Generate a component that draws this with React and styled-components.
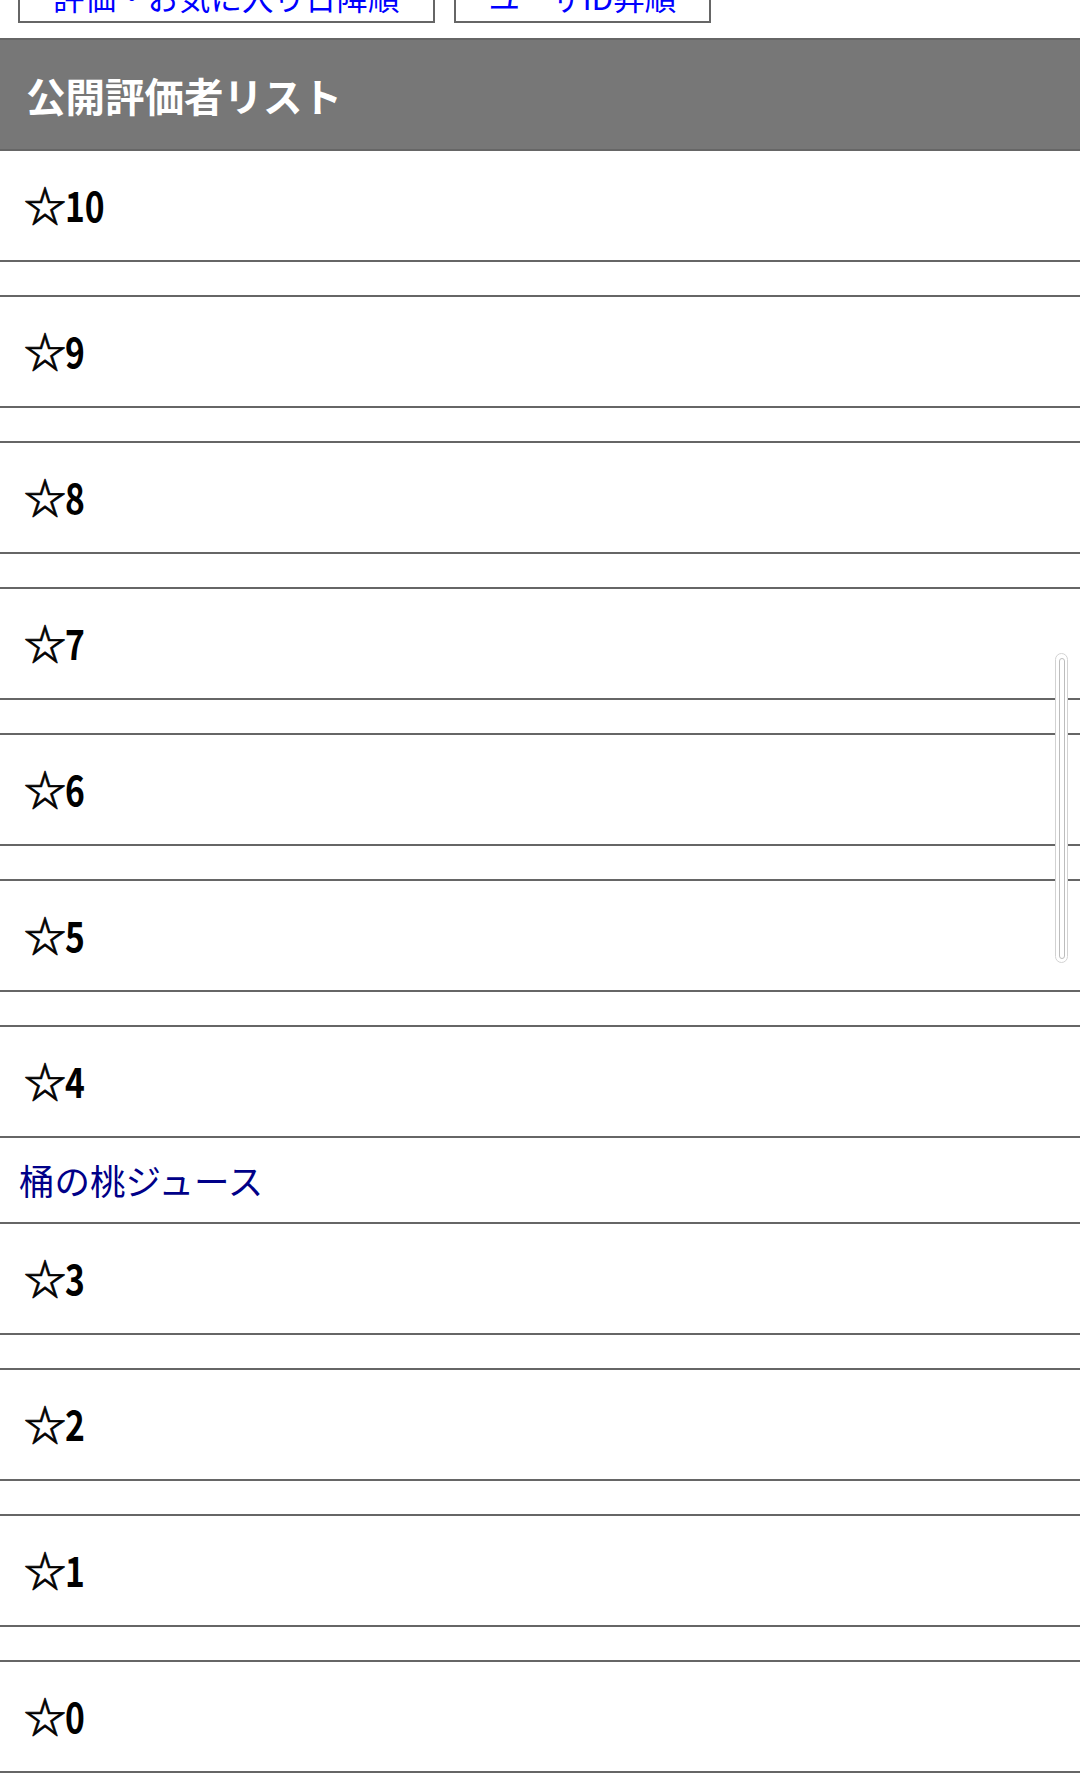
import React from "react";
import styled, { createGlobalStyle } from "styled-components";

const GlobalStyle = createGlobalStyle`
  html, body {
    margin: 0;
    padding: 0;
    background: #ffffff;
  }
  body {
    font-family: "Noto Sans CJK JP", "Noto Sans", sans-serif;
  }
`;

const Page = styled.div`
  width: 1080px;
  background: #ffffff;
`;

const TopBar = styled.div`
  height: 38px;
  overflow: hidden;
  display: flex;
  align-items: flex-end;
  gap: 19px;
  padding: 0 0 15px 18px;
  box-sizing: border-box;
`;

const SortButton = styled.button`
  flex: none;
  font-family: "Noto Sans CJK JP", sans-serif;
  font-size: 31.5px;
  line-height: 37px;
  color: #0000ff;
  background: #ffffff;
  border: 2px solid #666666;
  border-radius: 0;
  padding: 6px 33px;
  margin: 0;
  white-space: nowrap;
`;

const SectionHeader = styled.h2`
  margin: 0;
  height: 109px;
  display: flex;
  align-items: center;
  padding: 0 0 0 26px;
  background: #777777;
  border-top: 2px solid #666666;
  border-bottom: 2px solid #666666;
  color: #ffffff;
  font-family: "Noto Sans CJK JP", sans-serif;
  font-weight: 700;
  font-size: 39.5px;
  line-height: 1;
`;

const RatingHeading = styled.h3`
  margin: 0;
  height: 109px;
  box-sizing: border-box;
  display: flex;
  align-items: center;
  padding: 0 0 4px 24px;
  border-bottom: 2px solid #666666;
  box-sizing: content-box;
  height: 105px;
  color: #000000;
  font-family: "Noto Sans CJK JP", sans-serif;
  font-weight: 700;
  font-size: 42px;
  line-height: 1;
`;

const Star = styled.span`
  font-weight: 700;
  -webkit-text-stroke: 0.7px #000000;
`;

const Score = styled.span`
  display: inline-block;
  transform: scaleX(0.8);
  transform-origin: left center;
  font-weight: 700;
  margin-left: -1px;
`;

const RatingList = styled.ul`
  list-style: none;
  margin: 0;
  padding: 0;
  min-height: 33px;
  border-bottom: 2px solid #666666;
`;

const ListItem = styled.li`
  height: 84px;
  display: flex;
  align-items: center;
  padding: 0 0 0 19px;
`;

const ItemLink = styled.a`
  color: #000088;
  text-decoration: none;
  font-family: "Noto Sans CJK JP", sans-serif;
  font-size: 35.5px;
  line-height: 1;
`;

const ScrollIndicator = styled.div`
  position: fixed;
  left: 1055px;
  top: 653px;
  width: 13px;
  height: 310px;
  box-sizing: border-box;
  border: 1.5px solid #d2d2d2;
  border-radius: 7px;
  background: #ffffff;
  padding: 3.5px 2.5px;
`;

const ScrollThumb = styled.div`
  width: 100%;
  height: 100%;
  box-sizing: border-box;
  border: 1.5px solid #bdbdbd;
  border-radius: 4px;
  background: #ffffff;
`;

const ratings = [10, 9, 8, 7, 6, 5, 4, 3, 2, 1, 0];
const reviewers = { 4: ["桶の桃ジュース"] };

export default function App() {
  return (
    <Page>
      <GlobalStyle />
      <TopBar>
        <SortButton>評価・お気に入り日降順</SortButton>
        <SortButton>ユーザID昇順</SortButton>
      </TopBar>
      <SectionHeader>公開評価者リスト</SectionHeader>
      {ratings.map((r) => (
        <React.Fragment key={r}>
          <RatingHeading>
            <Star>☆</Star>
            <Score>{r}</Score>
          </RatingHeading>
          <RatingList>
            {(reviewers[r] || []).map((name) => (
              <ListItem key={name}>
                <ItemLink href="#">{name}</ItemLink>
              </ListItem>
            ))}
          </RatingList>
        </React.Fragment>
      ))}
      <ScrollIndicator>
        <ScrollThumb />
      </ScrollIndicator>
    </Page>
  );
}
